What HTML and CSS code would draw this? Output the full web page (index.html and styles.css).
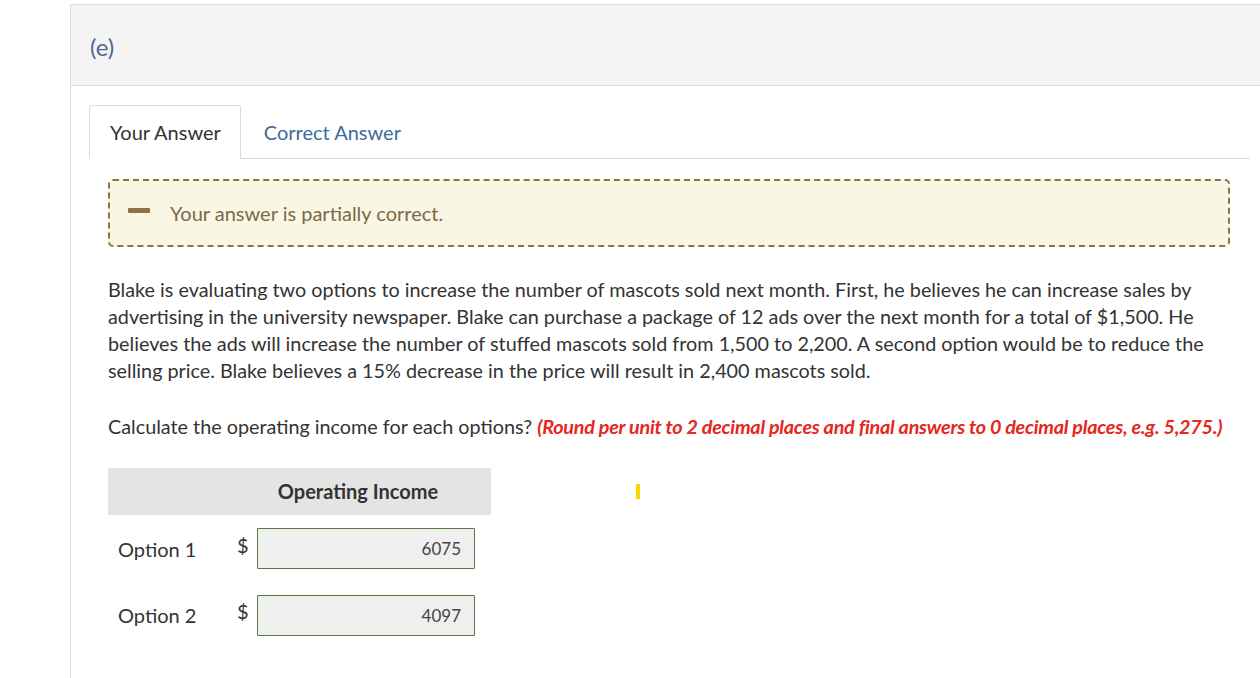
FILE: index.html
```html
<!DOCTYPE html>
<html>
<head>
<meta charset="utf-8">
<link rel="stylesheet" href="styles.css">
</head>
<body>
<div class="panel">
  <div class="panel-head">(e)</div>
  <div class="panel-body">
    <div class="tabs">
      <div class="tab active">Your Answer</div>
      <div class="tab link">Correct Answer</div>
    </div>
    <div class="content">
      <div class="alert"><span class="dash"></span><span>Your answer is partially correct.</span></div>
      <p class="question">Blake is evaluating two options to increase the number of mascots sold next month. First, he believes he can increase sales by advertising in the university newspaper. Blake can purchase a package of 12 ads over the next month for a total of $1,500. He believes the ads will increase the number of stuffed mascots sold from 1,500 to 2,200. A second option would be to reduce the selling price. Blake believes a 15% decrease in the price will result in 2,400 mascots sold.</p>
      <p class="question wide">Calculate the operating income for each options? <em class="hint">(Round per unit to 2 decimal places and final answers to 0 decimal places, e.g. 5,275.)</em></p>
      <div class="table-wrap">
        <div class="grid">
          <div class="th blank"></div>
          <div class="th title">Operating Income</div>
          <div class="label">Option 1</div>
          <div class="cur">$</div>
          <div class="cell"><div class="input">6075</div></div>
          <div class="label">Option 2</div>
          <div class="cur">$</div>
          <div class="cell"><div class="input">4097</div></div>
        </div>
        <span class="marker"></span>
      </div>
    </div>
  </div>
</div>
</body>
</html>
```

FILE: styles.css
```css
html, body {
  margin: 0;
  padding: 0;
  background: #fff;
  overflow: hidden;
  height: 678px;
}
body {
  font-family: Lato, "Open Sans", sans-serif;
  color: #333;
}
.panel {
  margin: 4px 0 0 70px;
  width: 1220px;
  border-left: 1px solid #dcdcdc;
  border-top: 1px solid #dcdcdc;
  height: 700px;
}
.panel-head {
  background: #f4f4f4;
  height: 81px;
  box-sizing: border-box;
  border-bottom: 1px solid #dcdcdc;
  padding: 27px 0 0 19px;
  font-size: 24px;
  color: #4f6794;
  line-height: 30px;
}
.panel-body {
  padding: 19px 0 0 18px;
}
.tabs {
  display: flex;
  border-bottom: 1px solid #dcdcdc;
  width: 1161px;
  height: 53px;
}
.tab {
  font-size: 20px;
  line-height: 52px;
  padding: 0 19px 0 20px;
}
.tab.active {
  border: 1px solid #dcdcdc;
  border-bottom: 1px solid #fff;
  border-radius: 3px 3px 0 0;
  margin-bottom: -1px;
  color: #333;
  background: #fff;
  height: 52px;
  line-height: 52px;
}
.tab.link {
  color: #3e6ba0;
  padding-left: 23px;
  line-height: 54px;
}
.content {
  padding: 20px 0 0 19px;
}
.alert {
  width: 1122px;
  box-sizing: border-box;
  height: 68px;
  border: 2px dashed #8a7443;
  border-radius: 5px;
  background: #faf6e4;
  display: flex;
  align-items: center;
  padding-left: 18px;
  font-size: 20px;
  color: #7b6a48;
}
.dash {
  display: inline-block;
  width: 22px;
  height: 5px;
  background: #8a7443;
  border-radius: 1px;
  margin-right: 20px;
  margin-top: -6px;
}
.question {
  margin: 29px 0 0 0;
  width: 1110px;
  font-size: 19.8px;
  line-height: 27px;
  color: #333;
}
.question.wide {
  width: 1140px;
  margin-top: 29px;
}
.hint {
  color: #e5271d;
  font-weight: bold;
  font-style: italic;
  letter-spacing: -0.25px;
}
.table-wrap {
  position: relative;
  margin-top: 28px;
}
.grid {
  display: grid;
  grid-template-columns: 117px 32px 234px;
  grid-template-rows: 47px 66px 66px;
  width: 383px;
}
.th {
  background: #e4e4e4;
}
.th.title {
  grid-column: 2 / 4;
  font-weight: bold;
  font-size: 20px;
  text-align: center;
  line-height: 47px;
  color: #333;
}
.label {
  font-size: 20px;
  padding: 22px 0 0 10px;
  line-height: 24px;
  color: #333;
}
.cur {
  font-size: 20px;
  padding: 18px 0 0 12px;
  line-height: 24px;
  color: #333;
}
.cell {
  padding-top: 13px;
  padding-right: 16px;
}
.input {
  height: 41px;
  box-sizing: border-box;
  border: 1px solid #557843;
  border-radius: 1px;
  background: #efefef;
  text-align: right;
  padding-right: 13px;
  font-size: 17px;
  line-height: 39px;
  color: #444;
}
.grid > .cell:nth-child(8) {
  padding-top: 14px;
}
.marker {
  position: absolute;
  left: 528px;
  top: 16px;
  width: 4px;
  height: 15px;
  background: #f5d900;
}
```
